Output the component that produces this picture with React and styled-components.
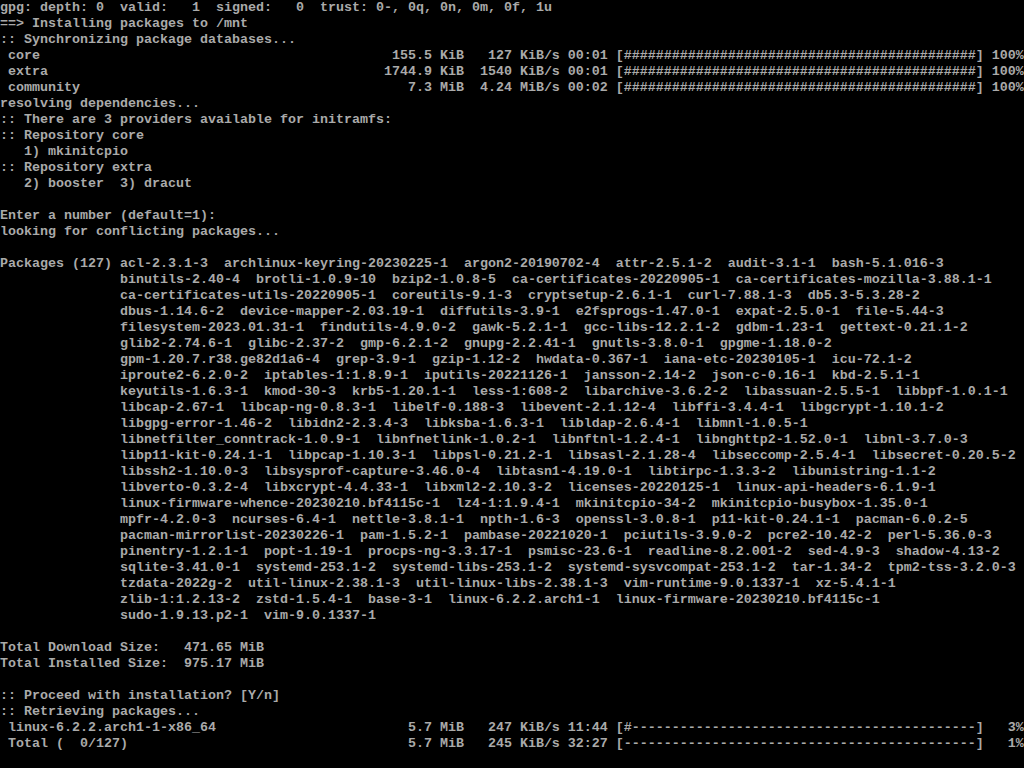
import React from "react";
import styled, { createGlobalStyle } from "styled-components";

const GlobalStyle = createGlobalStyle`
  html, body {
    margin: 0;
    padding: 0;
    background: #000;
  }
`;

const Screen = styled.div`
  width: 1024px;
  height: 768px;
  overflow: hidden;
  background: #000;
  color: #aaaaaa;
  font-family: "Liberation Mono", "DejaVu Sans Mono", monospace;
  font-size: 13.333px;
  font-weight: ${(props) => (props.bold ? 700 : 400)};
  line-height: 16px;
`;

const Line = styled.div`
  height: 16px;
  white-space: pre;
`;

const BAR_WIDTH = 44;
const INDENT = " ".repeat(15);

// pacman style download row: name, size, rate, eta, bar, percent
const progressRow = ({ name, size, unit, rate, rateUnit, time, pct }) => {
  const filled = Math.floor((BAR_WIDTH * pct) / 100);
  const bar = "#".repeat(filled) + "-".repeat(BAR_WIDTH - filled);
  const left = (" " + name).padEnd(54 - size.length) + size;
  return (
    `${left} ${unit}${rate.padStart(6)} ${rateUnit}/s ${time} [${bar}] ` +
    `${pct}%`.padStart(4)
  );
};

const packages = [
  "Packages (127) acl-2.3.1-3  archlinux-keyring-20230225-1  argon2-20190702-4  attr-2.5.1-2  audit-3.1-1  bash-5.1.016-3",
  "binutils-2.40-4  brotli-1.0.9-10  bzip2-1.0.8-5  ca-certificates-20220905-1  ca-certificates-mozilla-3.88.1-1",
  "ca-certificates-utils-20220905-1  coreutils-9.1-3  cryptsetup-2.6.1-1  curl-7.88.1-3  db5.3-5.3.28-2",
  "dbus-1.14.6-2  device-mapper-2.03.19-1  diffutils-3.9-1  e2fsprogs-1.47.0-1  expat-2.5.0-1  file-5.44-3",
  "filesystem-2023.01.31-1  findutils-4.9.0-2  gawk-5.2.1-1  gcc-libs-12.2.1-2  gdbm-1.23-1  gettext-0.21.1-2",
  "glib2-2.74.6-1  glibc-2.37-2  gmp-6.2.1-2  gnupg-2.2.41-1  gnutls-3.8.0-1  gpgme-1.18.0-2",
  "gpm-1.20.7.r38.ge82d1a6-4  grep-3.9-1  gzip-1.12-2  hwdata-0.367-1  iana-etc-20230105-1  icu-72.1-2",
  "iproute2-6.2.0-2  iptables-1:1.8.9-1  iputils-20221126-1  jansson-2.14-2  json-c-0.16-1  kbd-2.5.1-1",
  "keyutils-1.6.3-1  kmod-30-3  krb5-1.20.1-1  less-1:608-2  libarchive-3.6.2-2  libassuan-2.5.5-1  libbpf-1.0.1-1",
  "libcap-2.67-1  libcap-ng-0.8.3-1  libelf-0.188-3  libevent-2.1.12-4  libffi-3.4.4-1  libgcrypt-1.10.1-2",
  "libgpg-error-1.46-2  libidn2-2.3.4-3  libksba-1.6.3-1  libldap-2.6.4-1  libmnl-1.0.5-1",
  "libnetfilter_conntrack-1.0.9-1  libnfnetlink-1.0.2-1  libnftnl-1.2.4-1  libnghttp2-1.52.0-1  libnl-3.7.0-3",
  "libp11-kit-0.24.1-1  libpcap-1.10.3-1  libpsl-0.21.2-1  libsasl-2.1.28-4  libseccomp-2.5.4-1  libsecret-0.20.5-2",
  "libssh2-1.10.0-3  libsysprof-capture-3.46.0-4  libtasn1-4.19.0-1  libtirpc-1.3.3-2  libunistring-1.1-2",
  "libverto-0.3.2-4  libxcrypt-4.4.33-1  libxml2-2.10.3-2  licenses-20220125-1  linux-api-headers-6.1.9-1",
  "linux-firmware-whence-20230210.bf4115c-1  lz4-1:1.9.4-1  mkinitcpio-34-2  mkinitcpio-busybox-1.35.0-1",
  "mpfr-4.2.0-3  ncurses-6.4-1  nettle-3.8.1-1  npth-1.6-3  openssl-3.0.8-1  p11-kit-0.24.1-1  pacman-6.0.2-5",
  "pacman-mirrorlist-20230226-1  pam-1.5.2-1  pambase-20221020-1  pciutils-3.9.0-2  pcre2-10.42-2  perl-5.36.0-3",
  "pinentry-1.2.1-1  popt-1.19-1  procps-ng-3.3.17-1  psmisc-23.6-1  readline-8.2.001-2  sed-4.9-3  shadow-4.13-2",
  "sqlite-3.41.0-1  systemd-253.1-2  systemd-libs-253.1-2  systemd-sysvcompat-253.1-2  tar-1.34-2  tpm2-tss-3.2.0-3",
  "tzdata-2022g-2  util-linux-2.38.1-3  util-linux-libs-2.38.1-3  vim-runtime-9.0.1337-1  xz-5.4.1-1",
  "zlib-1:1.2.13-2  zstd-1.5.4-1  base-3-1  linux-6.2.2.arch1-1  linux-firmware-20230210.bf4115c-1",
  "sudo-1.9.13.p2-1  vim-9.0.1337-1",
].map((l, i) => (i === 0 ? l : INDENT + l));

const lines = [
  "gpg: depth: 0  valid:   1  signed:   0  trust: 0-, 0q, 0n, 0m, 0f, 1u",
  "==> Installing packages to /mnt",
  ":: Synchronizing package databases...",
  progressRow({ name: "core", size: "155.5", unit: "KiB", rate: "127", rateUnit: "KiB", time: "00:01", pct: 100 }),
  progressRow({ name: "extra", size: "1744.9", unit: "KiB", rate: "1540", rateUnit: "KiB", time: "00:01", pct: 100 }),
  progressRow({ name: "community", size: "7.3", unit: "MiB", rate: "4.24", rateUnit: "MiB", time: "00:02", pct: 100 }),
  "resolving dependencies...",
  ":: There are 3 providers available for initramfs:",
  ":: Repository core",
  "   1) mkinitcpio",
  ":: Repository extra",
  "   2) booster  3) dracut",
  "",
  "Enter a number (default=1): ",
  "looking for conflicting packages...",
  "",
  ...packages,
  "",
  "Total Download Size:   471.65 MiB",
  "Total Installed Size:  975.17 MiB",
  "",
  ":: Proceed with installation? [Y/n] ",
  ":: Retrieving packages...",
  progressRow({ name: "linux-6.2.2.arch1-1-x86_64", size: "5.7", unit: "MiB", rate: "247", rateUnit: "KiB", time: "11:44", pct: 3 }),
  progressRow({ name: "Total (  0/127)", size: "5.7", unit: "MiB", rate: "245", rateUnit: "KiB", time: "32:27", pct: 1 }),
];

const App = () => (
  <>
    <GlobalStyle />
    <Screen bold>
      {lines.map((text, i) => (
        <Line key={i}>{text}</Line>
      ))}
    </Screen>
  </>
);

export default App;
